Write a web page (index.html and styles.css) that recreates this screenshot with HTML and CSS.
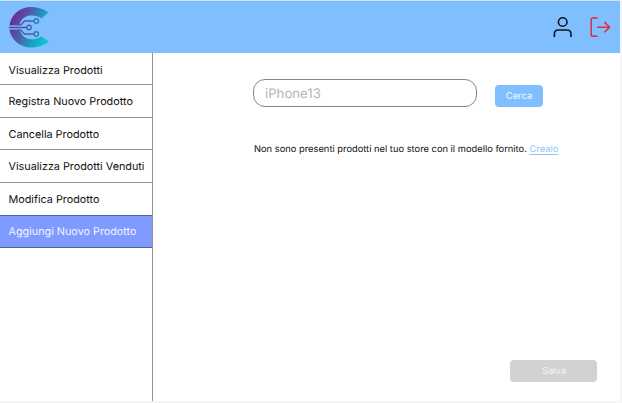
FILE: index.html
```html
<!DOCTYPE html>
<html lang="it">
<head>
<meta charset="utf-8">
<title>Aggiungi Nuovo Prodotto</title>
<link rel="stylesheet" href="styles.css">
</head>
<body>
<div class="app">
  <header class="header">
    <svg class="logo" viewBox="0 0 42 42" width="42" height="42">
      <defs>
        <linearGradient id="brand" gradientUnits="userSpaceOnUse" x1="3" y1="12" x2="38" y2="28">
          <stop offset="0" stop-color="#6b2f92"/>
          <stop offset="0.35" stop-color="#4d5ba8"/>
          <stop offset="0.7" stop-color="#1e9cc0"/>
          <stop offset="1" stop-color="#08c2cf"/>
        </linearGradient>
      </defs>
      <path fill="url(#brand)" d="M39.500 5.300C34 1.500 28 0 21 0C10 .5 1.500 8.500 .4 19H10L11 16C13 11 17.500 8.500 22.500 8.500C27 8.500 30 9.500 32.500 11.500ZM.4 22C1.500 32 10 40 21 40.500C28 40.700 34 39 40 34.800L32.500 29.500C29.500 31.500 26 32.500 22 32.300C16.500 31.800 12 28.500 10.500 22Z"/>
      <path d="M0 18.800H12M0 22.200H12" stroke="#80bfff" stroke-width=".8"/>
      <g fill="none" stroke="#5b3a98" stroke-width="1.400">
        <path d="M0 20.500H17.800"/>
        <path d="M8 17.700H12L15.500 14H25" stroke="#485da5"/>
        <path d="M8 23.300H12L15.500 27H25" stroke="#485da5"/>
        <circle cx="20" cy="20.500" r="2.200" stroke="#4269ad"/>
        <circle cx="27.300" cy="14" r="2.200" stroke="#2c7bb5"/>
        <circle cx="27.300" cy="27" r="2.200" stroke="#2c7bb5"/>
      </g>
    </svg>
    <div class="actions">
      <svg width="20" height="22" viewBox="0 0 20 22" fill="none" stroke="#10151c" stroke-width="1.600" stroke-linecap="round">
        <circle cx="9.700" cy="6" r="4.300"/>
        <path d="M1.400 20.500V18Q1.400 14 5.400 14H14Q18 14 18 18V20.500"/>
      </svg>
      <svg width="21" height="22" viewBox="0 0 21 22" fill="none" stroke="#e02f38" stroke-width="1.500" stroke-linecap="round" stroke-linejoin="round">
        <path d="M7 2H3Q1.200 2 1.200 3.800V18.500Q1.200 20.300 3 20.300H7"/>
        <path d="M7.500 11.200H19.500M14.800 6.400L19.600 11.200L14.800 16"/>
      </svg>
    </div>
  </header>
  <div class="body">
    <nav class="sidebar">
      <a class="item">Visualizza Prodotti</a>
      <a class="item">Registra Nuovo Prodotto</a>
      <a class="item">Cancella Prodotto</a>
      <a class="item">Visualizza Prodotti Venduti</a>
      <a class="item">Modifica Prodotto</a>
      <a class="item active">Aggiungi Nuovo Prodotto</a>
    </nav>
    <main class="main">
      <form class="search">
        <input class="field" type="text" placeholder="iPhone13">
        <button class="button" type="button">Cerca</button>
      </form>
      <p class="message">Non sono presenti prodotti nel tuo store con il modello fornito. <a class="link">Crealo</a></p>
      <button class="button save" type="button" disabled>Salva</button>
    </main>
  </div>
</div>
</body>
</html>
```
FILE: styles.css
```css
* { box-sizing: border-box; }
body {
  margin: 0;
  background: #f5f5f5;
  font-family: Inter, sans-serif;
  color: #111;
  text-rendering: geometricPrecision;
}
.app {
  width: 620px;
  height: 401px;
  display: flex;
  flex-direction: column;
  background: #fff;
  border-top: 1px solid #d5e5f6;
}
.header {
  height: 52px;
  flex: none;
  display: flex;
  justify-content: space-between;
  padding: 6px 9px 0;
  background: #80bfff;
}
.actions {
  display: flex;
  gap: 17px;
  padding-top: 9px;
}
.body {
  flex: 1;
  display: flex;
}
.sidebar {
  width: 153px;
  flex: none;
  display: grid;
  grid-template-rows: 32px 33px 32px 33px 33px 32px;
  align-content: start;
  border-right: 1px solid #929292;
}
.item {
  display: flex;
  align-items: center;
  padding: 2px 0 0 8.5px;
  border-bottom: 1px solid #929292;
  font-size: 10.8px;
  line-height: 14px;
  white-space: nowrap;
}
.item:first-child { padding-top: 4px; }
.item.active {
  padding-top: 1px;
  background: #809bff;
  color: #f0f3ff;
  border-color: #50629f;
  box-shadow: 0 -1px #50629f;
}
.main {
  flex: 1;
  display: flex;
  flex-direction: column;
  padding: 26px 23px 19px 100px;
}
.search {
  display: flex;
  align-items: flex-start;
  gap: 18px;
}
.field {
  width: 224px;
  height: 28px;
  padding: 2px 11px 0;
  border: 1px solid #858585;
  border-radius: 12px;
  background: #fff;
  font: 13.2px Inter, sans-serif;
  text-rendering: inherit;
}
.field::placeholder { color: #b5b5b5; }
.button {
  width: 48px;
  height: 22px;
  margin-top: 6px;
  padding: 0;
  border: 0;
  border-radius: 4px;
  background: #80bfff;
  color: #f4f9ff;
  font: 9.4px Inter, sans-serif;
  text-rendering: inherit;
}
.message {
  margin: 37px 0 0 1px;
  font-size: 9.33px;
  line-height: 12px;
  white-space: nowrap;
}
.link {
  color: #91c5f8;
  text-decoration: underline;
  text-underline-offset: 2px;
}
.save {
  width: 87px;
  padding-left: 1px;
  margin-top: auto;
  align-self: flex-end;
  background: #d2d2d2;
  color: #f4f4f4;
}
```
